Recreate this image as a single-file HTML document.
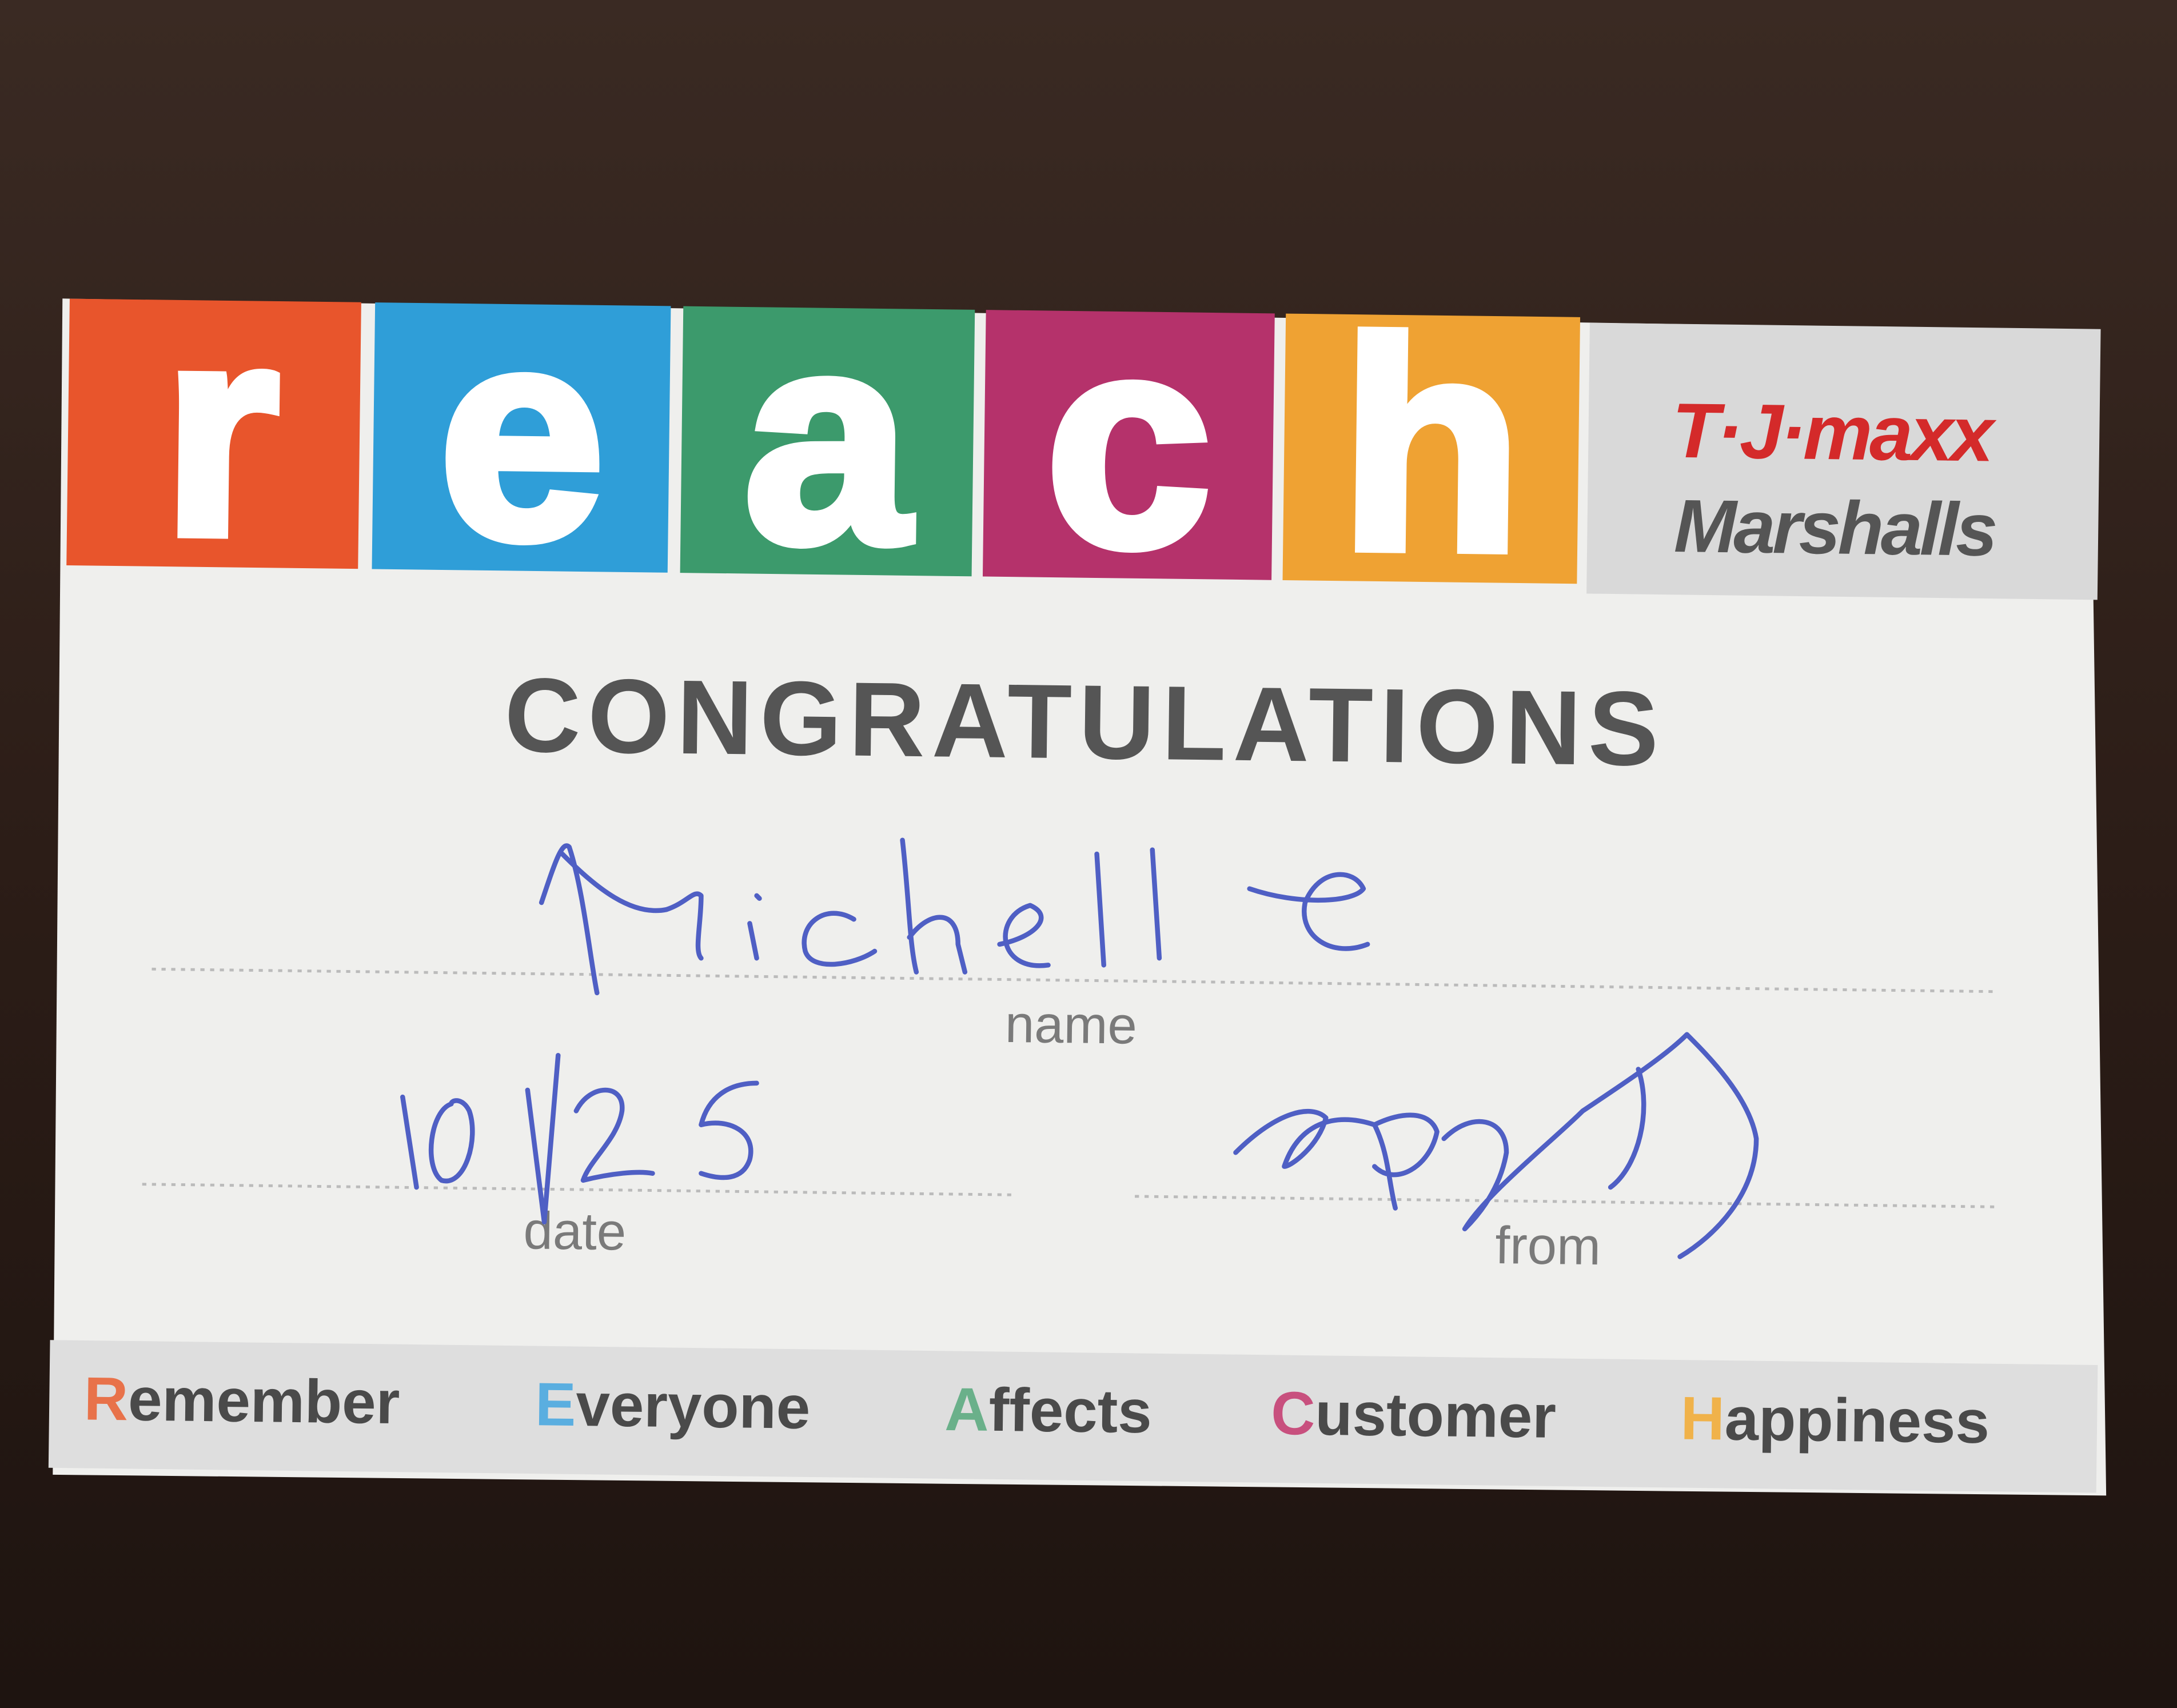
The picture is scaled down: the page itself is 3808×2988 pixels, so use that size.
<!DOCTYPE html>
<html><head><meta charset="utf-8"><style>
html,body{margin:0;padding:0;background:#2a1a14;}
svg{display:block}
</style></head><body>
<svg width="3808" height="2988" viewBox="0 0 1568 1230" preserveAspectRatio="none" xmlns="http://www.w3.org/2000/svg">
<defs>
<linearGradient id="bg" x1="0" y1="0" x2="0" y2="1">
<stop offset="0" stop-color="#3a2a23"/><stop offset="0.5" stop-color="#2c1d17"/><stop offset="1" stop-color="#1e1410"/>
</linearGradient>
</defs>
<rect width="1568" height="1230" fill="url(#bg)"/>
<polygon points="45,215 1505,238 1517,1077 38,1062" fill="#efefed"/>
<g transform="translate(0,6) rotate(0.7 775 640)" font-family="Liberation Sans, sans-serif">
<rect x="1140" y="222" width="368" height="195" fill="#d9d9d9"/>
<rect x="45" y="218" width="210" height="192" fill="#e8552c"/>
<rect x="265" y="218" width="213" height="192" fill="#2f9ed8"/>
<rect x="487" y="218" width="210" height="192" fill="#3c9a6c"/>
<rect x="705" y="218" width="208" height="192" fill="#b5326b"/>
<rect x="921" y="218" width="212" height="192" fill="#efa233"/>
<g fill="#fff" stroke="#fff" stroke-width="7" font-weight="bold" font-size="215" text-anchor="middle">
<text x="155" y="386">r</text>
<text x="372" y="386">e</text>
<text x="592" y="386">a</text>
<text x="809" y="386">c</text>
<text x="1027" y="386">h</text>
</g>
<text x="1315" y="318" text-anchor="middle" font-size="56" font-weight="bold" fill="#d42a2a" font-style="italic" letter-spacing="-2">T·J·maxx</text>
<text x="1318" y="386" text-anchor="middle" font-size="54" font-weight="bold" fill="#555" font-style="italic" letter-spacing="-2">Marshalls</text>
<rect x="40" y="968" width="1475" height="92" fill="#dedede"/>
<text x="780" y="540" text-anchor="middle" font-size="76" font-weight="bold" fill="#555" letter-spacing="5">CONGRATULATIONS</text>
<g stroke="#bbb" stroke-width="2" stroke-dasharray="3,4">
<line x1="110" y1="700" x2="1440" y2="700"/>
<line x1="105" y1="855" x2="735" y2="855"/>
<line x1="820" y1="855" x2="1440" y2="855"/>
</g>
<g fill="#7a7a7a" font-size="38">
<text x="725" y="745">name</text>
<text x="380" y="898">date</text>
<text x="1080" y="900">from</text>
</g>
<g font-size="44" font-weight="bold" fill="#4a4a4a">
<text x="65" y="1025"><tspan fill="#e8724a">R</tspan>emember</text>
<text x="390" y="1025"><tspan fill="#5aaee0">E</tspan>veryone</text>
<text x="685" y="1025"><tspan fill="#6ab08a">A</tspan>ffects</text>
<text x="920" y="1025"><tspan fill="#c8507e">C</tspan>ustomer</text>
<text x="1215" y="1025"><tspan fill="#f0b24a">H</tspan>appiness</text>
</g>
</g>
<g fill="none" stroke="#4f5fc4" stroke-width="3.5" stroke-linecap="round" stroke-linejoin="round">
<path d="M390,650 C400,620 405,605 410,610 C420,640 425,690 430,715 M405,615 C430,640 455,660 480,655 C495,650 500,640 505,645 C505,665 500,685 505,690"/>
<path d="M540,665 L545,690 M545,645 l2,2"/>
<path d="M615,662 C595,650 575,665 580,685 C585,700 615,695 630,685"/>
<path d="M650,605 C655,650 655,680 660,700 M655,675 C670,655 690,655 690,680 L695,700"/>
<path d="M720,680 C745,675 760,660 742,652 C715,660 718,700 755,695"/>
<path d="M790,615 L795,695 M830,612 L835,690"/>
<path d="M900,640 C935,652 975,650 982,640 C975,625 950,625 940,650 C935,675 960,690 985,680"/>
<path d="M290,790 L300,855 M325,795 C310,800 305,840 318,850 C335,855 345,820 338,800 C333,790 325,792 325,795"/>
<path d="M380,785 L392,880 L402,760"/>
<path d="M415,800 C425,780 450,780 448,800 C445,820 425,835 420,850 C440,845 460,843 470,845"/>
<path d="M545,780 C525,780 510,790 505,810 C525,805 545,815 540,835 C535,850 520,850 505,845"/>
<path d="M890,830 C920,800 945,795 955,805 C950,825 930,840 925,840 C935,810 960,800 990,810 C1000,830 1000,850 1005,870 M990,810 C1010,800 1030,800 1035,815 C1030,840 1005,855 990,840 M1040,820 C1060,800 1085,805 1085,830 C1080,860 1060,880 1055,885 C1070,860 1120,820 1140,800 C1170,780 1200,760 1215,745 C1230,760 1260,790 1265,820 C1265,860 1235,890 1210,905"/>
<path d="M1180,770 C1190,800 1180,840 1160,855"/>
</g>
</svg>
</body></html>
